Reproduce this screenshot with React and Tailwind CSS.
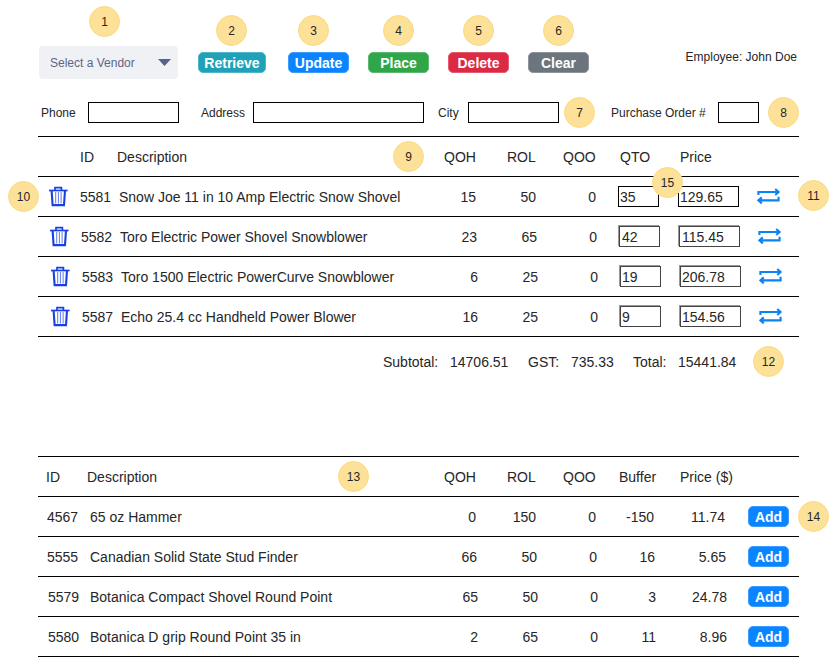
import React from 'react';

const orderItems = [
  { id: 5581, description: 'Snow Joe 11 in 10 Amp Electric Snow Shovel', qoh: 15, rol: 50, qoo: 0, qto: 35, price: '129.65', shift: 'pl-0', box: 'border-black pl-px' },
  { id: 5582, description: 'Toro Electric Power Shovel Snowblower', qoh: 23, rol: 65, qoo: 0, qto: 42, price: '115.45', shift: 'pl-px', box: 'border-[#444] pl-0.5 shadow-[-1px_-1px_0_#999]' },
  { id: 5583, description: 'Toro 1500 Electric PowerCurve Snowblower', qoh: 6, rol: 25, qoo: 0, qto: 19, price: '206.78', shift: 'pl-0.5', box: 'border-[#444] pl-px shadow-[-1px_-1px_0_#999]' },
  { id: 5587, description: 'Echo 25.4 cc Handheld Power Blower', qoh: 16, rol: 25, qoo: 0, qto: 9, price: '154.56', shift: 'pl-0.5', box: 'border-[#444] pl-px shadow-[-1px_-1px_0_#999]' },
];

const vendorItems = [
  { id: 4567, description: '65 oz Hammer', qoh: 0, rol: 150, qoo: 0, buffer: -150, price: '11.74', idPad: 'pl-[9px]', shift: 'pl-0' },
  { id: 5555, description: 'Canadian Solid State Stud Finder', qoh: 66, rol: 50, qoo: 0, buffer: 16, price: '5.65', idPad: 'pl-[9px]', shift: 'pl-px' },
  { id: 5579, description: 'Botanica Compact Shovel Round Point', qoh: 65, rol: 50, qoo: 0, buffer: 3, price: '24.78', idPad: 'pl-2.5', shift: 'pl-0.5' },
  { id: 5580, description: 'Botanica D grip Round Point 35 in', qoh: 2, rol: 65, qoo: 0, buffer: 11, price: '8.96', idPad: 'pl-2.5', shift: 'pl-0.5' },
];

const actions = [
  { label: 'Retrieve', style: 'w-[68px] mr-[22px] bg-[#1fa2b8] border-[#4fb6c7]' },
  { label: 'Update', style: 'w-[61px] mr-[19px] bg-[#0a84ff] border-[#3c9dff]' },
  { label: 'Place', style: 'w-[61px] mr-[19px] bg-[#2fa64a] border-[#5cba71]' },
  { label: 'Delete', style: 'w-[61px] mr-[19px] bg-[#dc2a45] border-[#e45b70]' },
  { label: 'Clear', style: 'w-[61px] bg-[#6c757d] border-[#8d949a]' },
];

const badges = [
  { n: 1, pos: 'left-[89px] top-[6px]' },
  { n: 2, pos: 'left-[216px] top-[15px]' },
  { n: 3, pos: 'left-[298px] top-[15px]' },
  { n: 4, pos: 'left-[383px] top-[15px]' },
  { n: 5, pos: 'left-[463px] top-[15px]' },
  { n: 6, pos: 'left-[543px] top-[15px]' },
  { n: 7, pos: 'left-[564px] top-[97px]' },
  { n: 8, pos: 'left-[768px] top-[97px]' },
  { n: 9, pos: 'left-[393px] top-[141px]' },
  { n: 10, pos: 'left-[8px] top-[181px]' },
  { n: 11, pos: 'left-[798px] top-[180px]' },
  { n: 12, pos: 'left-[753px] top-[346px]' },
  { n: 13, pos: 'left-[338px] top-[461px]' },
  { n: 14, pos: 'left-[798px] top-[501px]' },
  { n: 15, pos: 'left-[652px] top-[167px]' },
];

const Badge = ({ n, pos }) => (
  <span className={`absolute ${pos} flex h-[31px] w-[31px] items-center justify-center rounded-full border border-[#fbdb7c] bg-[#fde199] text-xs`}>
    {n}
  </span>
);

const TrashIcon = () => (
  <svg width="19" height="21" viewBox="0 0 19 21" fill="none" stroke="#1840e8">
    <path d="M0 4.5h18.6" strokeWidth="1.7" />
    <path d="M6 4V1.7h6.4V4" strokeWidth="1.7" />
    <path d="M2.6 4.5l1 14.6h11.4l1-14.6" strokeWidth="2.1" />
    <path d="M6.7 6v11.5M9.4 6v11.5M12.1 6v11.5" strokeWidth="1" stroke="#5f7cf0" />
  </svg>
);

const SwapIcon = () => (
  <svg width="24" height="16" viewBox="0 0 24 16" fill="none" stroke="#0a84f5" strokeWidth="2.1">
    <path d="M1.4 7V4h19.4M18.2 1l3.4 3-3.4 3" />
    <path d="M21.6 8.8v3.6H2.2M4.8 9.4l-3.4 3 3.4 3" />
  </svg>
);

const Field = ({ label, labelStyle, inputStyle }) => (
  <label className="flex items-center">
    <span className={labelStyle}>{label}</span>
    <input className={`h-[21px] border border-black bg-white ${inputStyle}`} />
  </label>
);

const App = () => {
  return (
    <div className="relative h-[666px] w-[837px] overflow-hidden bg-white font-['Liberation_Sans',Arial,sans-serif] text-sm text-[#262626]">
      <div className="ml-[38px] w-[761px]">
        <header className="flex items-start pt-[46px]">
          <button className="ml-px mr-5 flex h-[33px] w-[139px] items-center justify-between rounded bg-[#eff1f4] pl-[11px] pr-[7px] text-xs text-[#5d6785]">
            Select a Vendor
            <svg width="13" height="7" viewBox="0 0 13 7">
              <path d="M0 0h13L6.5 7z" fill="#57618a" />
            </svg>
          </button>
          <div className="flex pt-1.5">
            {actions.map((a) => (
              <button key={a.label} className={`h-[21px] rounded-[5px] border text-center leading-[21px] font-bold text-white ${a.style}`}>
                {a.label}
              </button>
            ))}
          </div>
          <div className="ml-auto pt-[3px] pr-[2px] text-xs">Employee: John Doe</div>
        </header>

        <div className="flex pt-[23px] pb-[13px] text-xs">
          <Field label="Phone" labelStyle="w-[50px] pl-[3px]" inputStyle="w-[91px]" />
          <Field label="Address" labelStyle="w-[74px] pl-[22px]" inputStyle="w-[171px]" />
          <Field label="City" labelStyle="w-11 pl-3.5" inputStyle="w-[91px]" />
          <Field label="Purchase Order #" labelStyle="w-[159px] pl-[52px]" inputStyle="w-[41px]" />
        </div>

        <section className="border-t border-black">
          <div className="flex h-10 items-center border-b border-black">
            <span className="w-[79px] pl-[42px]">ID</span>
            <span className="w-[327px]">Description</span>
            <span className="w-[63px]">QOH</span>
            <span className="w-14">ROL</span>
            <span className="w-[57px]">QOO</span>
            <span className="w-[60px]">QTO</span>
            <span>Price</span>
          </div>
          {orderItems.map((item) => (
            <div key={item.id} className={`flex h-10 items-center border-b border-black ${item.shift}`}>
              <span className="w-[42px] pb-px pl-[10.5px]"><TrashIcon /></span>
              <span className="w-[39px]">{item.id}</span>
              <span className="w-[297px] whitespace-nowrap">{item.description}</span>
              <span className="w-[60px] text-right">{item.qoh}</span>
              <span className="w-[60px] text-right">{item.rol}</span>
              <span className="w-[60px] text-right">{item.qoo}</span>
              <input defaultValue={item.qto} className={`ml-[22px] h-[21px] w-[41px] border bg-white ${item.box}`} />
              <input defaultValue={item.price} className={`ml-[19px] h-[21px] w-[61px] border bg-white ${item.box}`} />
              <span className="ml-[18px] pb-px"><SwapIcon /></span>
            </div>
          ))}
        </section>

        <div className="flex h-[119px] pt-[15px] pl-[345px]">
          <span className="w-[67px]">Subtotal:</span>
          <span className="w-[78px]">14706.51</span>
          <span className="w-[43px]">GST:</span>
          <span className="w-[62px]">735.33</span>
          <span className="w-[45px]">Total:</span>
          <span>15441.84</span>
        </div>

        <section className="border-t border-black">
          <div className="flex h-10 items-center border-b border-black">
            <span className="w-[49px] pl-2">ID</span>
            <span className="w-[357px]">Description</span>
            <span className="w-[63px]">QOH</span>
            <span className="w-14">ROL</span>
            <span className="w-14">QOO</span>
            <span className="w-[61px]">Buffer</span>
            <span>Price ($)</span>
          </div>
          {vendorItems.map((item) => (
            <div key={item.id} className="flex h-10 items-center border-b border-black">
              <span className={`w-[52px] ${item.idPad}`}>{item.id}</span>
              <span className="w-[326px]">{item.description}</span>
              <div className={`flex w-[332px] ${item.shift}`}>
                <span className="w-[60px] text-right">{item.qoh}</span>
                <span className="w-[60px] text-right">{item.rol}</span>
                <span className="w-[60px] text-right">{item.qoo}</span>
                <span className="w-[58px] text-right">{item.buffer}</span>
                <span className="w-[71px] text-right">{item.price}</span>
              </div>
              <button className="h-[21px] w-[41px] rounded-[5px] border border-[#3c9dff] bg-[#0a84ff] leading-[21px] font-bold text-white">
                Add
              </button>
            </div>
          ))}
        </section>
      </div>

      {badges.map((b) => (
        <Badge key={b.n} {...b} />
      ))}
    </div>
  );
};

export default App;
